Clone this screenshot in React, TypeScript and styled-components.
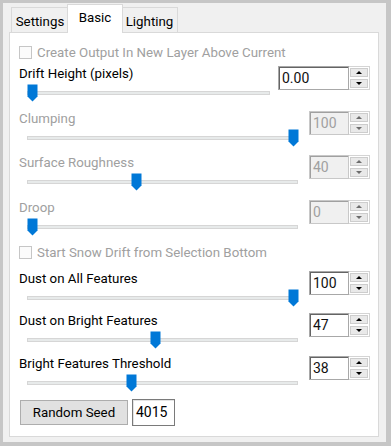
import React from 'react';
import styled, { createGlobalStyle } from 'styled-components';

const GlobalStyle = createGlobalStyle`
  html, body {
    margin: 0;
    padding: 0;
    background: #c6c6c6;
  }
  body {
    font-family: Roboto, "Liberation Sans", Arial, sans-serif;
    font-size: 13.3px;
  }
`;

type SliderItem = {
  label: string;
  value: string;
  pos: number;
  enabled: boolean;
  wide?: boolean;
  h: number;
};

const topSliders: SliderItem[] = [
  { label: 'Drift Height (pixels)', value: '0.00', pos: 0, enabled: true, wide: true, h: 45 },
  { label: 'Clumping', value: '100', pos: 1, enabled: false, h: 44 },
  { label: 'Surface Roughness', value: '40', pos: 0.4, enabled: false, h: 45 },
  { label: 'Droop', value: '0', pos: 0, enabled: false, h: 46 },
];

const bottomSliders: SliderItem[] = [
  { label: 'Dust on All Features', value: '100', pos: 1, enabled: true, h: 42 },
  { label: 'Dust on Bright Features', value: '47', pos: 0.47, enabled: true, h: 43 },
  { label: 'Bright Features Threshold', value: '38', pos: 0.38, enabled: true, h: 45 },
];

function Slider({ item }: { item: SliderItem }) {
  const trackWidth = item.wide ? 243 : 271;
  const left = item.pos * (trackWidth - 10);
  return (
    <SliderGroup $h={item.h}>
      <Label $disabled={!item.enabled}>{item.label}</Label>
      <SliderArea $w={trackWidth}>
        <Track />
        <Thumb style={{ left }} width="11" height="18" viewBox="0 0 11 18">
          <path d="M0.5 0.5 H10.5 V12.5 L5.5 17.5 L0.5 12.5 Z" fill="#0078d7" />
        </Thumb>
      </SliderArea>
      <Spinner>
        <ValueBox $w={item.wide ? 71 : 40} $disabled={!item.enabled}>
          {item.value}
        </ValueBox>
        <ButtonStack>
          <ArrowButton>
            <Arrow $up $disabled={!item.enabled} />
          </ArrowButton>
          <ArrowButton>
            <Arrow $disabled={!item.enabled} />
          </ArrowButton>
        </ButtonStack>
      </Spinner>
    </SliderGroup>
  );
}

export default function App() {
  return (
    <>
      <GlobalStyle />
      <Frame>
        <Dialog>
          <TabStrip>
            <Tab $w={58}>Settings</Tab>
            <Tab $w={56} $selected>Basic</Tab>
            <Tab $w={57}>Lighting</Tab>
          </TabStrip>
          <Panel>
            <CheckRow $gapBelow={4}>
              <CheckBox />
              <span>Create Output In New Layer Above Current</span>
            </CheckRow>
            {topSliders.map((s) => (
              <Slider key={s.label} item={s} />
            ))}
            <CheckRow $gapBelow={9}>
              <CheckBox />
              <span>Start Snow Drift from Selection Bottom</span>
            </CheckRow>
            {bottomSliders.map((s) => (
              <Slider key={s.label} item={s} />
            ))}
            <SeedRow>
              <SeedButton>Random Seed</SeedButton>
              <SeedBox>4015</SeedBox>
            </SeedRow>
          </Panel>
        </Dialog>
      </Frame>
    </>
  );
}

const Frame = styled.div`
  width: 391px;
  height: 446px;
  box-sizing: border-box;
  padding: 3px 5px 4px 3px;
  background: #c6c6c6;
  display: flex;
`;

const Dialog = styled.div`
  flex: 1;
  background: #f0f0f0;
  display: flex;
  flex-direction: column;
  padding: 1px 7px 5px 6px;
`;

const TabStrip = styled.div`
  display: flex;
  align-items: flex-end;
  height: 29px;
  padding-left: 2px;
`;

const Tab = styled.div<{ $w: number; $selected?: boolean }>`
  position: relative;
  z-index: ${(p) => (p.$selected ? 2 : 1)};
  box-sizing: border-box;
  width: ${(p) => p.$w}px;
  height: ${(p) => (p.$selected ? 29 : 25)}px;
  margin: ${(p) => (p.$selected ? '0 -2px 0 -2px' : '0 0 1px 0')};
  padding: ${(p) => (p.$selected ? '0 0 3px 0' : '3px 0 0 0')};
  background: ${(p) => (p.$selected ? '#ffffff' : '#f0f0f0')};
  border: 1px solid #d9d9d9;
  border-bottom: none;
  display: flex;
  align-items: center;
  justify-content: center;
  color: #000;
`;

const Panel = styled.div`
  flex: 1;
  margin-top: -1px;
  background: #ffffff;
  border: 1px solid #d9d9d9;
  padding: 11px 8px 0 9px;
  display: flex;
  flex-direction: column;
`;

const CheckRow = styled.div<{ $gapBelow: number }>`
  display: flex;
  align-items: center;
  gap: 5px;
  height: 16px;
  margin-bottom: ${(p) => p.$gapBelow}px;
  color: #a0a0a0;
  white-space: nowrap;
  span {
    padding-top: 1px;
  }
`;

const CheckBox = styled.div`
  width: 13px;
  height: 13px;
  box-sizing: border-box;
  border: 1px solid #c6c6c6;
  background: #fbfbfb;
`;

const SliderGroup = styled.div<{ $h: number }>`
  display: grid;
  grid-template-columns: 1fr auto;
  grid-template-rows: 16px auto;
  height: ${(p) => p.$h}px;
`;

const Label = styled.div<{ $disabled: boolean }>`
  grid-column: 1;
  grid-row: 1;
  padding-top: 2px;
  line-height: 16px;
  white-space: nowrap;
  color: ${(p) => (p.$disabled ? '#a0a0a0' : '#000000')};
`;

const SliderArea = styled.div<{ $w: number }>`
  grid-column: 1;
  grid-row: 2;
  position: relative;
  margin-left: 8px;
  width: ${(p) => p.$w}px;
  height: 28px;
`;

const Track = styled.div`
  margin-top: 11px;
  height: 4px;
  box-sizing: border-box;
  background: #e7eaea;
  border: 1px solid #d6d6d6;
`;

const Thumb = styled.svg`
  position: absolute;
  top: 4px;
  display: block;
`;

const Spinner = styled.div`
  grid-column: 2;
  grid-row: 1 / span 2;
  align-self: start;
  margin-top: 2px;
  display: flex;
  height: 24px;
`;

const ValueBox = styled.div<{ $w: number; $disabled: boolean }>`
  width: ${(p) => p.$w}px;
  box-sizing: border-box;
  height: 24px;
  padding-left: 3px;
  line-height: 23px;
  font-size: 14px;
  border: 1px solid ${(p) => (p.$disabled ? '#c8c8c8' : '#a8a8a8')};
  box-shadow: inset 1px 1px 0 ${(p) => (p.$disabled ? '#a0a0a0' : '#646464')};
  background: ${(p) => (p.$disabled ? '#f0f0f0' : '#ffffff')};
  color: ${(p) => (p.$disabled ? '#a0a0a0' : '#111111')};
`;

const ButtonStack = styled.div`
  width: 21px;
  display: flex;
  flex-direction: column;
  box-sizing: border-box;
  border: 1px solid #d4d4d4;
  border-left: none;
`;

const ArrowButton = styled.div`
  flex: 1;
  display: flex;
  align-items: center;
  justify-content: center;
  background: #e9e9e9;
  border: 1px solid #cdcdcd;
  margin: 1px;
`;

const Arrow = styled.div<{ $up?: boolean; $disabled: boolean }>`
  width: 0;
  height: 0;
  border-left: 3px solid transparent;
  border-right: 3px solid transparent;
  ${(p) =>
    p.$up
      ? `border-bottom: 3px solid ${p.$disabled ? '#6d6d6d' : '#000'};`
      : `border-top: 3px solid ${p.$disabled ? '#6d6d6d' : '#000'};`}
`;

const SeedRow = styled.div`
  display: flex;
  align-items: center;
  gap: 4px;
  padding-left: 1px;
`;

const SeedButton = styled.div`
  width: 108px;
  height: 25px;
  box-sizing: border-box;
  background: #e1e1e1;
  border: 1px solid #adadad;
  display: flex;
  align-items: center;
  justify-content: center;
  color: #000;
`;

const SeedBox = styled.div`
  width: 43px;
  height: 27px;
  box-sizing: border-box;
  border: 1px solid #7a7a7a;
  box-shadow: inset 1px 1px 0 #e3e3e3;
  background: #ffffff;
  padding-left: 3px;
  line-height: 25px;
  font-size: 14px;
  color: #000;
`;
